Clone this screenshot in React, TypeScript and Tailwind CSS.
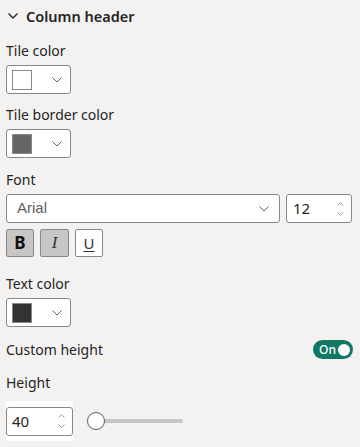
import React from "react";

const font = { fontFamily: '"Segoe UI", "Noto Sans", sans-serif' };

function Chevron({ className = "" }: { className?: string }) {
  return (
    <svg className={className} width="10" height="6" viewBox="0 0 10 6" fill="none">
      <path d="M0.5 0.5 L5 5 L9.5 0.5" stroke="#605e5c" strokeWidth="1" />
    </svg>
  );
}

function ColorPicker({ swatch }: { swatch: string }) {
  return (
    <div className="w-[65px] h-[29px] bg-white border border-[#8a8886] rounded-[3px] flex items-center pl-[5px] pr-[8px] justify-between">
      <div className="w-[20px] h-[20px] border border-[#8a8886]" style={{ background: swatch }} />
      <Chevron />
    </div>
  );
}

function Spinner() {
  return (
    <div className="flex flex-col items-center gap-[6px]">
      <svg width="7" height="4" viewBox="0 0 7 4" fill="none">
        <path d="M0.5 3.5 L3.5 0.5 L6.5 3.5" stroke="#a19f9d" strokeWidth="1" />
      </svg>
      <svg width="7" height="4" viewBox="0 0 7 4" fill="none">
        <path d="M0.5 0.5 L3.5 3.5 L6.5 0.5" stroke="#a19f9d" strokeWidth="1" />
      </svg>
    </div>
  );
}

export default function App() {
  return (
    <div className="w-[360px] h-[447px] bg-[#f3f2f1] overflow-hidden text-[#252423] px-[6px]" style={font}>
      <div className="h-[31px] flex items-center pl-[2px]">
        <svg width="10" height="6" viewBox="0 0 10 6" fill="none" className="mt-[1px]">
          <path d="M0.5 0.5 L5 5 L9.5 0.5" stroke="#252423" strokeWidth="1.3" />
        </svg>
        <span className="ml-[8px] text-[14.5px] font-semibold leading-[20px]">Column header</span>
      </div>

      <div className="mt-[10px] text-[14px] leading-[20px]">Tile color</div>
      <div className="mt-[4px]"><ColorPicker swatch="#ffffff" /></div>

      <div className="mt-[11px] text-[14px] leading-[20px]">Tile border color</div>
      <div className="mt-[4px]"><ColorPicker swatch="#666666" /></div>

      <div className="mt-[12px] text-[14px] leading-[20px]">Font</div>
      <div className="mt-[4px] flex gap-[6px]">
        <div className="w-[274px] h-[29px] bg-white border border-[#8a8886] rounded-[3px] flex items-center justify-between pl-[10px] pr-[10px]">
          <span className="text-[15px] text-[#605e5c]" style={{ fontFamily: '"Liberation Sans", Arial, sans-serif' }}>Arial</span>
          <Chevron />
        </div>
        <div className="w-[66px] h-[29px] bg-white border border-[#8a8886] rounded-[3px] flex items-center justify-between pl-[6px] pr-[7px]">
          <span className="text-[15px] text-[#252423]">12</span>
          <Spinner />
        </div>
      </div>
      <div className="mt-[6px] flex gap-[6px]">
        <div className="w-[28px] h-[28px] bg-[#c8c6c4] border border-[#8a8886] rounded-[2px] flex items-center justify-center">
          <span className="text-[17px] font-bold text-[#111]" style={{ fontFamily: '"Noto Sans", sans-serif' }}>B</span>
        </div>
        <div className="w-[29px] h-[28px] bg-[#c8c6c4] border border-[#8a8886] rounded-[2px] flex items-center justify-center">
          <span className="text-[17px] italic text-[#323130]" style={{ fontFamily: '"Liberation Serif", serif' }}>I</span>
        </div>
        <div className="w-[28px] h-[28px] bg-white border border-[#8a8886] rounded-[2px] flex items-center justify-center">
          <span className="text-[15px] underline underline-offset-[2px] text-[#323130]">U</span>
        </div>
      </div>

      <div className="mt-[17px] text-[14px] leading-[20px]">Text color</div>
      <div className="mt-[4px]"><ColorPicker swatch="#333333" /></div>

      <div className="mt-[12px] flex items-center justify-between h-[21px]">
        <span className="text-[14px] leading-[20px]">Custom height</span>
        <div className="w-[40px] h-[19px] rounded-full bg-[#117865] flex items-center justify-between pl-[6px] pr-[3px] mr-[1px]">
          <span className="text-[12px] font-medium text-white leading-none">On</span>
          <div className="w-[12px] h-[12px] rounded-full bg-white" />
        </div>
      </div>

      <div className="mt-[13px] text-[14px] leading-[20px]">Height</div>
      <div className="mt-[8px] flex items-center">
        <div className="w-[67px] h-[40px] bg-white flex items-center">
          <div className="w-[67px] h-[29px] border border-[#8a8886] rounded-[3px] flex items-center justify-between pl-[5px] pr-[7px]">
            <span className="text-[15px] text-[#252423]">40</span>
            <Spinner />
          </div>
        </div>
        <div className="ml-[14px] relative w-[96px] h-[18px] flex items-center">
          <div className="absolute left-[8px] right-0 h-[4px] rounded-full bg-[#c8c6c4]" />
          <div className="relative w-[18px] h-[18px] rounded-full bg-white border-[1.5px] border-[#605e5c]" />
        </div>
      </div>
    </div>
  );
}
